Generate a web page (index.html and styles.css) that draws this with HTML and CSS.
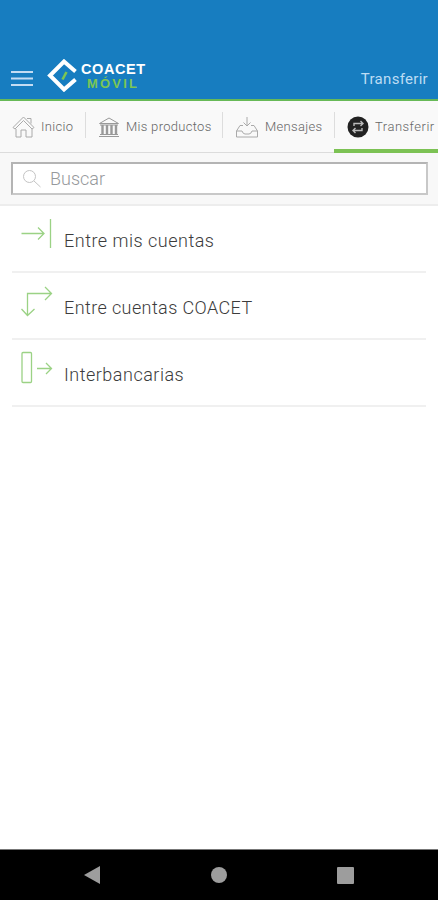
FILE: index.html
```html
<!DOCTYPE html>
<html lang="es">
<head>
    <meta charset="UTF-8">
    <meta name="viewport" content="width=device-width, initial-scale=1.0">
    <title>Coacet Móvil - Transferir</title>
    <link rel="stylesheet" href="styles.css">
</head>
<body>
    <header class="header">
        <svg class="menu" width="22" height="17" viewBox="0 0 22 17" stroke="#c3dcf3" stroke-width="2.2">
            <path d="M0 2h22M0 8.5h22M0 15h22"/>
        </svg>
        <div class="logo">
            <svg width="32" height="33" viewBox="0 0 32 33" fill="none">
                <path d="M28.5 12.5L17 2.5L3 16.5L17 30.500L28.500 20.500" stroke="#fff" stroke-width="4"/>
                <path d="M15.500 20.500L19.500 13" stroke="#7cc653" stroke-width="2.600"/>
            </svg>
            <div class="brand">
                <span class="brand-name">COACET</span>
                <span class="brand-sub">MÓVIL</span>
            </div>
        </div>
        <span class="title">Transferir</span>
    </header>

    <nav class="tabs">
        <div class="tab tab-home">
            <svg width="24" height="24" viewBox="0 0 24 24" fill="none" stroke="#aaa">
                <path d="M1 12.500L11.500 2L22 12.500L20 14L11.500 5.500L3 14ZM4 14v8h5v-7h5v7h6v-8M15 3.500h4v5"/>
            </svg>
            <span>Inicio</span>
        </div>
        <div class="tab tab-products">
            <svg width="22" height="22" viewBox="0 0 22 22" fill="none" stroke="#999">
                <path d="M1.500 7.500L11 2l9.500 5.500zM2 9h18M2 18.500h18M1 20.500h20"/>
                <path d="M4.500 9v9M9 9v9M13.500 9v9M18 9v9" stroke-width="2.400"/>
            </svg>
            <span>Mis productos</span>
        </div>
        <div class="tab tab-messages">
            <svg width="24" height="24" viewBox="0 0 24 24" fill="none" stroke="#aaa">
                <path d="M12 2v9M8.500 7.500L12 11l3.500-3.500M8 10.500H5L1.500 16v6h21v-6L19 10.500h-3M1.500 16H7q1 3 3 3h4q2 0 3-3h5.500"/>
            </svg>
            <span>Mensajes</span>
        </div>
        <div class="tab tab-transfer active">
            <svg width="22" height="22" viewBox="0 0 22 22" fill="none">
                <circle cx="11" cy="11" r="10.500" fill="#222"/>
                <path d="M7 10V7.500h9M13.500 5l2.500 2.500l-2.500 2.500M15 12v2.500H6M8.500 12l-2.500 2.500l2.500 2.500" stroke="#bbb" stroke-width="1.400"/>
            </svg>
            <span>Transferir</span>
        </div>
    </nav>

    <div class="search">
        <div class="search-box">
            <svg width="20" height="20" viewBox="0 0 20 20" fill="none" stroke="#c4c4c4">
                <circle cx="7.500" cy="7.500" r="6"/>
                <path d="M12 12l6.500 6"/>
            </svg>
            <span>Buscar</span>
        </div>
    </div>

    <main class="list">
        <div class="row">
            <svg width="34" height="34" viewBox="0 0 34 34" fill="none" stroke="#9bd285" stroke-width="1.300">
                <path d="M1.500 16.500H24M18 10.500l6 6l-6 6M30.500 2v29"/>
            </svg>
            <span>Entre mis cuentas</span>
        </div>
        <div class="row row-coacet">
            <svg width="34" height="34" viewBox="0 0 34 34" fill="none" stroke="#9bd285" stroke-width="1.300">
                <path d="M7.500 31V9.500H31M25 3l6.500 6.500l-6.500 6.500M1.500 25l6 6.500l7-6.500"/>
            </svg>
            <span>Entre cuentas COACET</span>
        </div>
        <div class="row">
            <svg width="34" height="34" viewBox="0 0 34 34" fill="none" stroke="#9bd285" stroke-width="1.300">
                <rect x="2" y="1.500" width="9.500" height="30" rx="1"/>
                <path d="M17 17.500h14.500M26 12l5.500 5.500l-5.500 5.500"/>
            </svg>
            <span>Interbancarias</span>
        </div>
    </main>

    <footer class="navbar">
        <svg width="16" height="18" viewBox="0 0 16 18" fill="#9d9d9d"><path d="M0 9L16 0v18z"/></svg>
        <svg width="16" height="16" viewBox="0 0 16 16" fill="#9d9d9d"><circle cx="8" cy="8" r="8"/></svg>
        <svg width="17" height="17" viewBox="0 0 17 17" fill="#9d9d9d"><rect width="17" height="17" rx="1"/></svg>
    </footer>
</body>
</html>
```
FILE: styles.css
```css
* {
    box-sizing: border-box;
}
body {
    margin: 0;
    height: 900px;
    display: flex;
    flex-direction: column;
    background: white;
    font-family: Roboto, "Liberation Sans", sans-serif;
    font-weight: 300;
    overflow: hidden;
}
svg {
    display: block;
    flex: none;
}
.header {
    height: 101px;
    padding: 57px 10px 0 11px;
    display: flex;
    align-items: flex-start;
    background: #177dc0;
    border-bottom: 2px solid #67b957;
}
.menu {
    margin-top: 13px;
}
.logo {
    display: flex;
    margin: 2px 0 0 14px;
}
.brand {
    margin: 3px 0 0 2px;
    font-family: "Liberation Sans", Arial, sans-serif;
    font-weight: bold;
}
.brand-name,
.brand-sub {
    display: block;
    line-height: 14px;
}
.brand-name {
    color: white;
    font-size: 14.5px;
    letter-spacing: 0.6px;
}
.brand-sub {
    margin: 1px 0 0 6px;
    color: #7cc653;
    font-size: 13px;
    letter-spacing: 2.2px;
}
.title {
    margin: 13px 0 0 auto;
    color: #bcdcf4;
    font-size: 15px;
    font-weight: 400;
    line-height: 18px;
    letter-spacing: 0.3px;
}
.tabs {
    height: 52px;
    display: flex;
    background: #f9f9f9;
    border-bottom: 1px solid #dcdcdc;
    color: #666;
    font-size: 13px;
    letter-spacing: 0.3px;
}
.tab {
    position: relative;
    flex: none;
    display: flex;
    align-items: center;
    white-space: nowrap;
}
.tab + .tab::before {
    content: "";
    position: absolute;
    left: 0;
    top: 11px;
    width: 1px;
    height: 26px;
    background: #ddd;
}
.tab-home {
    width: 85px;
    padding-left: 12px;
    gap: 5px;
}
.tab-products {
    width: 137px;
    padding-left: 13px;
    gap: 6px;
}
.tab-messages {
    width: 112px;
    padding-left: 13px;
    gap: 6px;
}
.tab-transfer {
    width: 104px;
    padding-left: 13px;
    gap: 6px;
    letter-spacing: 0.5px;
}
.active::after {
    content: "";
    position: absolute;
    left: 0;
    right: 0;
    bottom: -1px;
    height: 4px;
    background: #7cc254;
}
.search {
    height: 53px;
    padding: 9px 10px 0 11px;
    background: #f8f8f8;
    border-bottom: 2px solid #ededed;
}
.search-box {
    height: 33px;
    padding-left: 9px;
    display: flex;
    align-items: center;
    gap: 8px;
    background: white;
    border: 2px solid #c8c8c8;
    border-top-color: #b4b4b4;
    border-left-color: #b4b4b4;
    color: #96999c;
    font-size: 18px;
    letter-spacing: 0;
}
.list {
    flex: 1;
    padding: 0 12px;
}
.row {
    height: 67px;
    padding: 11px 0 0 8px;
    display: flex;
    gap: 10px;
    border-bottom: 2px solid #f0f0f0;
    color: #3c3c3c;
    font-size: 18px;
    letter-spacing: 0.5px;
}
.row-coacet {
    letter-spacing: 0.4px;
}
.row span {
    margin-top: 13px;
    line-height: 22px;
}
.navbar {
    height: 51px;
    padding: 0 84px;
    display: flex;
    align-items: center;
    justify-content: space-between;
    background: black;
    border-top: 1px solid #777;
}
```
